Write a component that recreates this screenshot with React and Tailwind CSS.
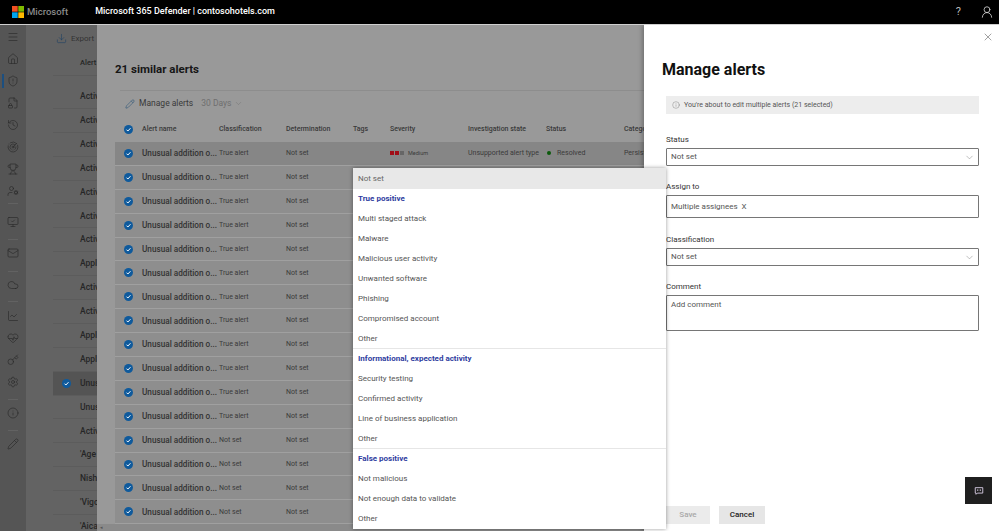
// App.jsx
import {
  Menu, Home, ShieldAlert, FileLock2, History, Radar, Trophy, UserCog, MonitorCheck, Mail, Cloud,
  ChartLine, HeartPulse, Key, Settings, Info, Pencil, Download, ChevronDown, X, UserRound,
} from "lucide-react";

const listNames = ["Activ", "Activ", "Activ", "Activ", "Activ", "Activ", "Activ", "Appl", "Activ", "Activ", "Appl", "Appl", "Unus", "Unus", "Activ", "'Age", "Nish", "'Vigo", "'Aica"];

const rows = Array.from({ length: 16 }, (_, i) => (i < 12 ? "True alert" : "Not set"));

function Check({ className }) {
  return (
    <svg viewBox="0 0 16 16" className={className}>
      <circle cx="8" cy="8" r="8" fill="#0f5a9c" />
      <path d="M4.5 8.3l2.4 2.4 4.6-5" fill="none" stroke="#fff" strokeWidth="1.7" />
    </svg>
  );
}

function RailIcon({ icon: Icon }) {
  return (
    <div className="h-[22px] flex items-center justify-center">
      <Icon size={12} strokeWidth={1.3} className="text-[#2a2a2a]" />
    </div>
  );
}

function Rail() {
  return (
    <div className="w-[26px] bg-[#555555] flex flex-col pt-[1px] shrink-0 relative">
      <RailIcon icon={Menu} />
      <RailIcon icon={Home} />
      <RailIcon icon={ShieldAlert} />
      <RailIcon icon={FileLock2} />
      <RailIcon icon={History} />
      <RailIcon icon={Radar} />
      <RailIcon icon={Trophy} />
      <RailIcon icon={UserCog} />
      <div className="h-px bg-[#626262] mx-2 mt-[1px] mb-[7px]" />
      <RailIcon icon={MonitorCheck} />
      <div className="h-px bg-[#626262] mx-2 mt-[6px] mb-[2px]" />
      <RailIcon icon={Mail} />
      <div className="h-px bg-[#626262] mx-2 mt-[7px] mb-[2px]" />
      <RailIcon icon={Cloud} />
      <div className="h-px bg-[#626262] mx-2 mt-[5px] mb-[3px]" />
      <RailIcon icon={ChartLine} />
      <RailIcon icon={HeartPulse} />
      <RailIcon icon={Key} />
      <RailIcon icon={Settings} />
      <div className="h-px bg-[#626262] mx-2 mt-[6px] mb-[2px]" />
      <RailIcon icon={Info} />
      <div className="h-px bg-[#626262] mx-2 mt-[6px] mb-[2px]" />
      <RailIcon icon={Pencil} />
      <div className="absolute left-[2px] top-[49px] w-[2px] h-[14px] bg-[#1c4f80]" />
    </div>
  );
}

function BackgroundList() {
  return (
    <div className="flex-1 bg-[#636363] text-[#262626] overflow-hidden">
      <div className="pl-[30px] h-[25px] pt-[2px] flex items-center gap-[4px] text-[8px] text-[#333333]">
        <Download size={11} strokeWidth={1.2} className="text-[#173f63]" />
        Export
      </div>
      <div className="ml-[27px] pl-[27px] h-[26px] flex items-center text-[7.5px] font-medium border-b border-[#5c5c5c]">Alert</div>
      <div className="ml-[27px] mt-[9px]">
        {listNames.map((name, i) => (
          <div
            key={i}
            className={`h-[23.9px] pl-[27px] flex items-center text-[8.5px] font-medium relative border-b border-[#5c5c5c] ${i === 12 ? "bg-[#545454]" : ""}`}
          >
            {i === 12 && <Check className="absolute left-[9px] top-[7px] w-[9px] h-[9px]" />}
            {name}
          </div>
        ))}
      </div>
    </div>
  );
}

function SimilarAlerts() {
  return (
    <div className="absolute left-[97px] top-0 bottom-0 w-[547px] bg-[#999999] overflow-hidden text-[#3a3a3a] flex flex-col">
      <h2 className="pl-[18px] pt-[36px] text-[11.5px] font-bold text-[#161616] leading-[16px]">21 similar alerts</h2>
      <div className="ml-[23px] mt-[13px] h-px bg-[#8d8d8d] shrink-0" />
      <div className="pl-[28px] h-[25px] flex items-center text-[8.5px] shrink-0">
        <Pencil size={10} strokeWidth={1.2} className="text-[#1c4a73] mr-[4px]" />
        <span>Manage alerts</span>
        <span className="ml-[8px] text-[#6f6f6f]">30 Days</span>
        <ChevronDown size={9} strokeWidth={1.2} className="ml-[3px] text-[#6f6f6f]" />
      </div>
      <div className="h-[26px] flex items-center text-[7px] font-medium shrink-0 whitespace-nowrap">
        <Check className="ml-[27px] w-[9px] h-[9px] mr-[9px] shrink-0" />
        <span className="w-[77px] shrink-0">Alert name</span>
        <span className="w-[67px] shrink-0">Classification</span>
        <span className="w-[67px] shrink-0">Determination</span>
        <span className="w-[37px] shrink-0">Tags</span>
        <span className="w-[78px] shrink-0">Severity</span>
        <span className="w-[78px] shrink-0">Investigation state</span>
        <span className="w-[78px] shrink-0">Status</span>
        <span>Category</span>
      </div>
      <div className="ml-[18px] flex-1">
        {rows.map((value, i) => (
          <div
            key={i}
            className={`h-[23.9px] flex items-center border-b border-[#a0a0a0] text-[7px] whitespace-nowrap overflow-hidden ${i === 0 ? "bg-[#868686]" : "bg-[#8e8e8e]"}`}
          >
            <Check className="ml-[9px] w-[9px] h-[9px] mr-[9px] shrink-0" />
            <span className="w-[77px] shrink-0 text-[8.2px] font-medium text-[#333333]">Unusual addition o...</span>
            <span className="w-[67px] shrink-0">{value}</span>
            <span className="w-[67px] shrink-0">Not set</span>
            {i === 0 && (
              <>
                <span className="ml-[37px] w-[78px] shrink-0 flex items-center gap-[1px] text-[5.5px]">
                  <i className="w-[4px] h-[4px] bg-[#a10d16]" />
                  <i className="w-[4px] h-[4px] bg-[#a10d16]" />
                  <i className="w-[4px] h-[4px] bg-[#666666]" />
                  <span className="ml-[3px]">Medium</span>
                </span>
                <span className="w-[78px] shrink-0">Unsupported alert type</span>
                <span className="w-[78px] shrink-0 flex items-center">
                  <i className="w-[4px] h-[4px] rounded-full bg-[#0b5a0b] ml-[1px] mr-[6px]" />
                  Resolved
                </span>
                <span>Persistence</span>
              </>
            )}
          </div>
        ))}
      </div>
      <div className="absolute left-0 right-0 bottom-0 h-[7px] bg-[#8a8a8a] pl-[3px] text-[5px] leading-[7px] text-[#555555]">◂</div>
    </div>
  );
}

function Select() {
  return (
    <div className="h-[18px] border border-[#767676] rounded-[1px] flex items-center justify-between pl-[4px] pr-[3px] text-[8px] text-[#555555]">
      Not set
      <ChevronDown size={11} strokeWidth={1} className="text-[#777777]" />
    </div>
  );
}

function Label({ children }) {
  return <div className="h-[12px] text-[8px] leading-[12px] text-[#333333] mb-[2px]">{children}</div>;
}

function ManagePanel() {
  return (
    <div className="absolute left-[644px] top-0 bottom-0 right-0 bg-white flex flex-col pl-[22px] pr-[20px] pb-[7px] shadow-[-2px_0_4px_rgba(0,0,0,0.25)]">
      <X size={12} strokeWidth={1} className="absolute right-[5px] top-[6px] text-[#444444]" />
      <h1 className="ml-[-4px] mt-[35px] text-[16px] leading-[20px] font-bold text-[#111111]">Manage alerts</h1>
      <div className="mt-[16px] h-[18px] bg-[#ededed] flex items-center pl-[6px] gap-[4px] text-[7px] text-[#555555]">
        <Info size={8} strokeWidth={1} />
        You're about to edit multiple alerts (21 selected)
      </div>
      <div className="mt-[20px]">
        <Label>Status</Label>
        <Select />
      </div>
      <div className="mt-[15px]">
        <Label>Assign to</Label>
        <div className="h-[23px] border border-[#767676] rounded-[1px] flex items-center px-[4px] text-[8px] text-[#555555]">Multiple assignees&nbsp;&nbsp;X</div>
      </div>
      <div className="mt-[16px]">
        <Label>Classification</Label>
        <Select />
      </div>
      <div className="mt-[15px]">
        <Label>Comment</Label>
        <div className="h-[36px] border border-[#767676] rounded-[1px] px-[4px] pt-[3px] text-[8px] text-[#555555]">Add comment</div>
      </div>
      <div className="mt-auto flex gap-[9px] text-[8px]">
        <button className="w-[44px] h-[18px] bg-[#ebebeb] text-[#a8a8a8] font-medium">Save</button>
        <button className="w-[46px] h-[18px] bg-[#e6e6e6] text-[#222222] font-medium">Cancel</button>
      </div>
      <div className="absolute right-[7px] bottom-[27px] w-[27px] h-[27px] bg-[#1f1f1f] flex items-center justify-center">
        <svg viewBox="0 0 12 12" className="w-[10px] h-[10px]" fill="none">
          <path d="M1.5 2h9v6.5H4L2.5 10V8.5h-1z" stroke="#e8dcf5" strokeWidth="1" />
          <path d="M4.5 4v2M7.5 4v2" stroke="#e8dcf5" strokeWidth="1" />
        </svg>
      </div>
    </div>
  );
}

const dropdownItems = [
  ["head", "True positive"],
  ["item", "Multi staged attack"],
  ["item", "Malware"],
  ["item", "Malicious user activity"],
  ["item", "Unwanted software"],
  ["item", "Phishing"],
  ["item", "Compromised account"],
  ["last", "Other"],
  ["head", "Informational, expected activity"],
  ["item", "Security testing"],
  ["item", "Confirmed activity"],
  ["item", "Line of business application"],
  ["last", "Other"],
  ["head", "False positive"],
  ["item", "Not malicious"],
  ["item", "Not enough data to validate"],
  ["item", "Other"],
];

function Dropdown() {
  return (
    <div className="absolute left-[353px] top-[143px] w-[313px] bg-white shadow-[0_0_4px_rgba(0,0,0,0.4)] text-[8px] text-[#555555]">
      <div className="h-[21px] bg-[#e8e8e8] pl-[5px] pt-[1px] flex items-center text-[#666666]">Not set</div>
      {dropdownItems.map(([kind, label], i) => (
        <div
          key={i}
          className={`h-[20px] pl-[5px] flex items-center ${kind === "head" ? "font-bold text-[#2f3da0]" : ""} ${kind === "last" ? "border-b border-[#e6e6e6]" : ""}`}
        >
          {label}
        </div>
      ))}
    </div>
  );
}

export default function App() {
  return (
    <div className="w-[999px] h-[531px] overflow-hidden flex flex-col font-['Roboto',sans-serif]">
      <header className="h-[25px] shrink-0 bg-black border-b border-[#cfcfcf] flex items-center pl-[12px] pr-[5px]">
        <svg viewBox="0 0 12 12" className="w-[12px] h-[12px] mr-[3px]">
          <rect width="5.7" height="5.7" fill="#f25022" />
          <rect x="6.3" width="5.7" height="5.7" fill="#7fba00" />
          <rect y="6.3" width="5.7" height="5.7" fill="#00a4ef" />
          <rect x="6.3" y="6.3" width="5.7" height="5.7" fill="#ffb900" />
        </svg>
        <span className="text-[9.5px] font-medium text-[#8a8a8a]">Microsoft</span>
        <span className="ml-[27px] text-[9px] font-medium text-white">Microsoft 365 Defender | contosohotels.com</span>
        <span className="ml-auto text-[11px] text-[#bbbbbb] mr-[19px]">?</span>
        <UserRound size={14} strokeWidth={1.3} className="text-[#e6e6e6]" />
      </header>
      <main className="flex-1 min-h-0 flex relative overflow-hidden">
        <Rail />
        <BackgroundList />
        <SimilarAlerts />
        <ManagePanel />
        <Dropdown />
      </main>
    </div>
  );
}
